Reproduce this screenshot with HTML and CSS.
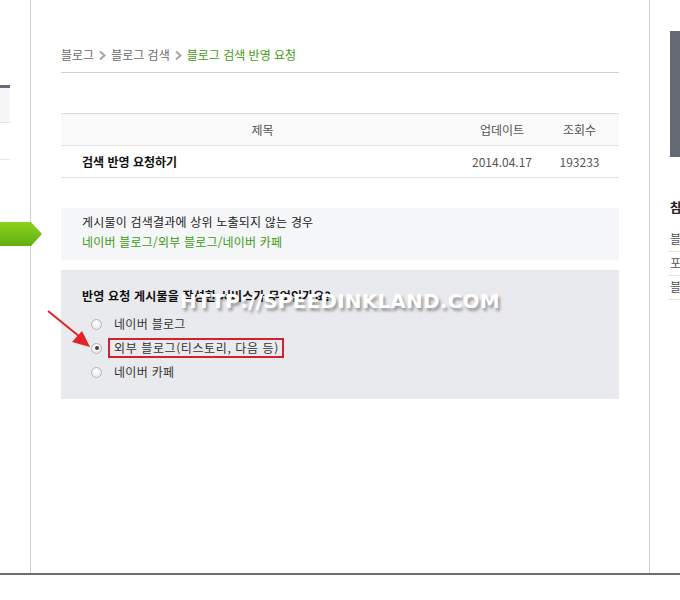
FILE: index.html
```html
<!DOCTYPE html>
<html lang="ko">
<head>
<meta charset="utf-8">
<link rel="stylesheet" href="styles.css">
</head>
<body>
<div class="page">
  <aside class="left">
    <div class="left-bar"></div>
    <div class="left-box"></div>
    <div class="left-item"></div>
    <div class="green-tab"></div>
  </aside>
  <main class="main">
    <div class="crumbs">
      <span>블로그</span>
      <svg class="chev" width="7" height="9" viewBox="0 0 7 9"><path d="M1 0.5 L5.5 4.5 L1 8.5" fill="none" stroke="#a5a5a5" stroke-width="2"/></svg>
      <span>블로그 검색</span>
      <svg class="chev" width="7" height="9" viewBox="0 0 7 9"><path d="M1 0.5 L5.5 4.5 L1 8.5" fill="none" stroke="#a5a5a5" stroke-width="2"/></svg>
      <span class="cur">블로그 검색 반영 요청</span>
    </div>
    <div class="table">
      <div class="row head">
        <div class="c-title">제목</div>
        <div class="c-date">업데이트</div>
        <div class="c-views">조회수</div>
      </div>
      <div class="row body">
        <div class="c-title bold">검색 반영 요청하기</div>
        <div class="c-date">2014.04.17</div>
        <div class="c-views">193233</div>
      </div>
    </div>
    <div class="info">
      <p>게시물이 검색결과에 상위 노출되지 않는 경우</p>
      <p class="green">네이버 블로그/외부 블로그/네이버 카페</p>
    </div>
    <div class="question">
      <p class="q-title">반영 요청 게시물을 작성한 서비스가 무엇인가요?</p>
      <ul class="options">
        <li><span class="radio"></span><span class="lbl">네이버 블로그</span></li>
        <li><span class="radio on"></span><span class="lbl boxed">외부 블로그(티스토리, 다음 등)</span></li>
        <li><span class="radio"></span><span class="lbl">네이버 카페</span></li>
      </ul>
      <div class="watermark">HTTP://SPEEDINKLAND.COM</div>
    </div>
  </main>
  <aside class="right">
    <div class="right-box"></div>
    <div class="r-title">참</div>
    <ul class="r-list">
      <li>블</li>
      <li>포</li>
      <li>블</li>
    </ul>
  </aside>
</div>
<svg class="red-arrow" width="60" height="50" viewBox="0 0 60 50">
  <line x1="2" y1="2" x2="34" y2="28" stroke="#e0242a" stroke-width="2"/>
  <polygon points="44,38 26,33 36,22" fill="#e0242a"/>
</svg>
<div class="footer-line"></div>
</body>
</html>
```
FILE: styles.css
```css
html, body {
  margin: 0;
  padding: 0;
  background: #fff;
}
body {
  font-family: "Noto Sans CJK KR", "Noto Sans", sans-serif;
  font-size: 12px;
  color: #333;
  position: relative;
  width: 680px;
  height: 600px;
  overflow: hidden;
}
p { margin: 0; }
ul { margin: 0; padding: 0; list-style: none; }

.page {
  display: flex;
  height: 573px;
}

/* left column */
.left {
  width: 30px;
  border-right: 1px solid #cfcfcf;
  display: flex;
  flex-direction: column;
}
.left-bar {
  margin-top: 85px;
  width: 10px;
  height: 3px;
  background: #676976;
}
.left-box {
  width: 10px;
  height: 34px;
  background: #f6f6f6;
  border-bottom: 1px solid #e6e6e6;
}
.left-item {
  width: 10px;
  height: 36px;
  border-bottom: 1px solid #e6e6e6;
}
.green-tab {
  margin-top: 62px;
  width: 42px;
  height: 24px;
  background: linear-gradient(#8fd21f, #5fae10);
  clip-path: polygon(0 0, 31px 0, 42px 12px, 31px 24px, 0 24px);
  position: relative;
  z-index: 2;
}

/* main */
.main {
  width: 588px;
  padding-left: 30px;
  border-right: 1px solid #cfcfcf;
  position: relative;
}
.crumbs {
  margin-top: 47px;
  width: 558px;
  height: 16px;
  line-height: 16px;
  padding-bottom: 9px;
  border-bottom: 1px solid #d2d2d2;
  color: #6a6a6a;
  display: flex;
  align-items: center;
  gap: 5px;
}
.crumbs .cur { color: #3d9b10; }
.chev { display: block; }

.table {
  margin-top: 40px;
  width: 558px;
  border-top: 1px solid #dadada;
}
.row {
  display: flex;
  height: 31px;
  align-items: center;
  border-bottom: 1px solid #e3e3e3;
}
.row.head {
  background: #f9f9f9;
  color: #555;
}
.row.body { color: #555; padding-bottom: 1px; height: 30px; }
.c-title { width: 403px; text-align: center; }
.c-title.bold {
  text-align: left;
  padding-left: 21px;
  width: 382px;
  font-weight: bold;
  color: #111;
}
.c-date { width: 76px; text-align: center; }
.c-views { width: 79px; text-align: center; }

.info {
  margin-top: 30px;
  width: 558px;
  height: 52px;
  box-sizing: border-box;
  padding: 4px 21px 0;
  background: #f5f6f8;
  color: #222;
  line-height: 20px;
  letter-spacing: 0.2px;
}
.info .green { color: #3d9b10; }

.question {
  margin-top: 10px;
  width: 558px;
  height: 129px;
  box-sizing: border-box;
  padding: 17px 21px 0;
  background: #e9eaed;
  position: relative;
}
.q-title {
  font-weight: bold;
  color: #111;
  line-height: 18px;
  letter-spacing: 0.2px;
}
.options {
  margin-top: 7px;
  padding-left: 9px;
}
.options li {
  display: flex;
  align-items: center;
  height: 24px;
}
.radio {
  width: 11px;
  height: 11px;
  border-radius: 50%;
  border: 1px solid #b4b4b4;
  background: radial-gradient(circle at 40% 35%, #ffffff, #e3e3e3);
  box-sizing: border-box;
  position: relative;
}
.radio.on::after {
  content: "";
  position: absolute;
  left: 2.5px;
  top: 2.5px;
  width: 4px;
  height: 4px;
  border-radius: 50%;
  background: #444;
}
.lbl {
  margin-left: 12px;
  color: #333;
  line-height: 16px;
  letter-spacing: 0.3px;
}
.lbl.boxed {
  margin-left: 6px;
  border: 2px solid #d2222b;
  padding: 0 3px 0 4px;
  letter-spacing: 0.6px;
}
.watermark {
  position: absolute;
  left: 119px;
  top: 19px;
  font-family: "DejaVu Sans", sans-serif;
  font-weight: bold;
  font-size: 20px;
  letter-spacing: 0.2px;
  color: #fff;
  text-shadow: 2px 3px 3px rgba(0,0,0,0.35);
  white-space: nowrap;
}

/* right column */
.right {
  flex: 1;
  padding-left: 20px;
  overflow: hidden;
}
.right-box {
  margin-top: 31px;
  width: 20px;
  height: 126px;
  background: #646873;
}
.r-title {
  margin-top: 41px;
  font-weight: bold;
  color: #222;
  font-size: 13px;
  line-height: 18px;
}
.r-list {
  margin-top: 12px;
  margin-left: -2px;
}
.r-list li {
  height: 23px;
  line-height: 22px;
  padding-left: 2px;
  border-bottom: 1px solid #e3e3e3;
  color: #555;
}

.red-arrow {
  position: absolute;
  left: 46px;
  top: 309px;
}
.footer-line {
  height: 2px;
  background: #6d6d6d;
}
```
